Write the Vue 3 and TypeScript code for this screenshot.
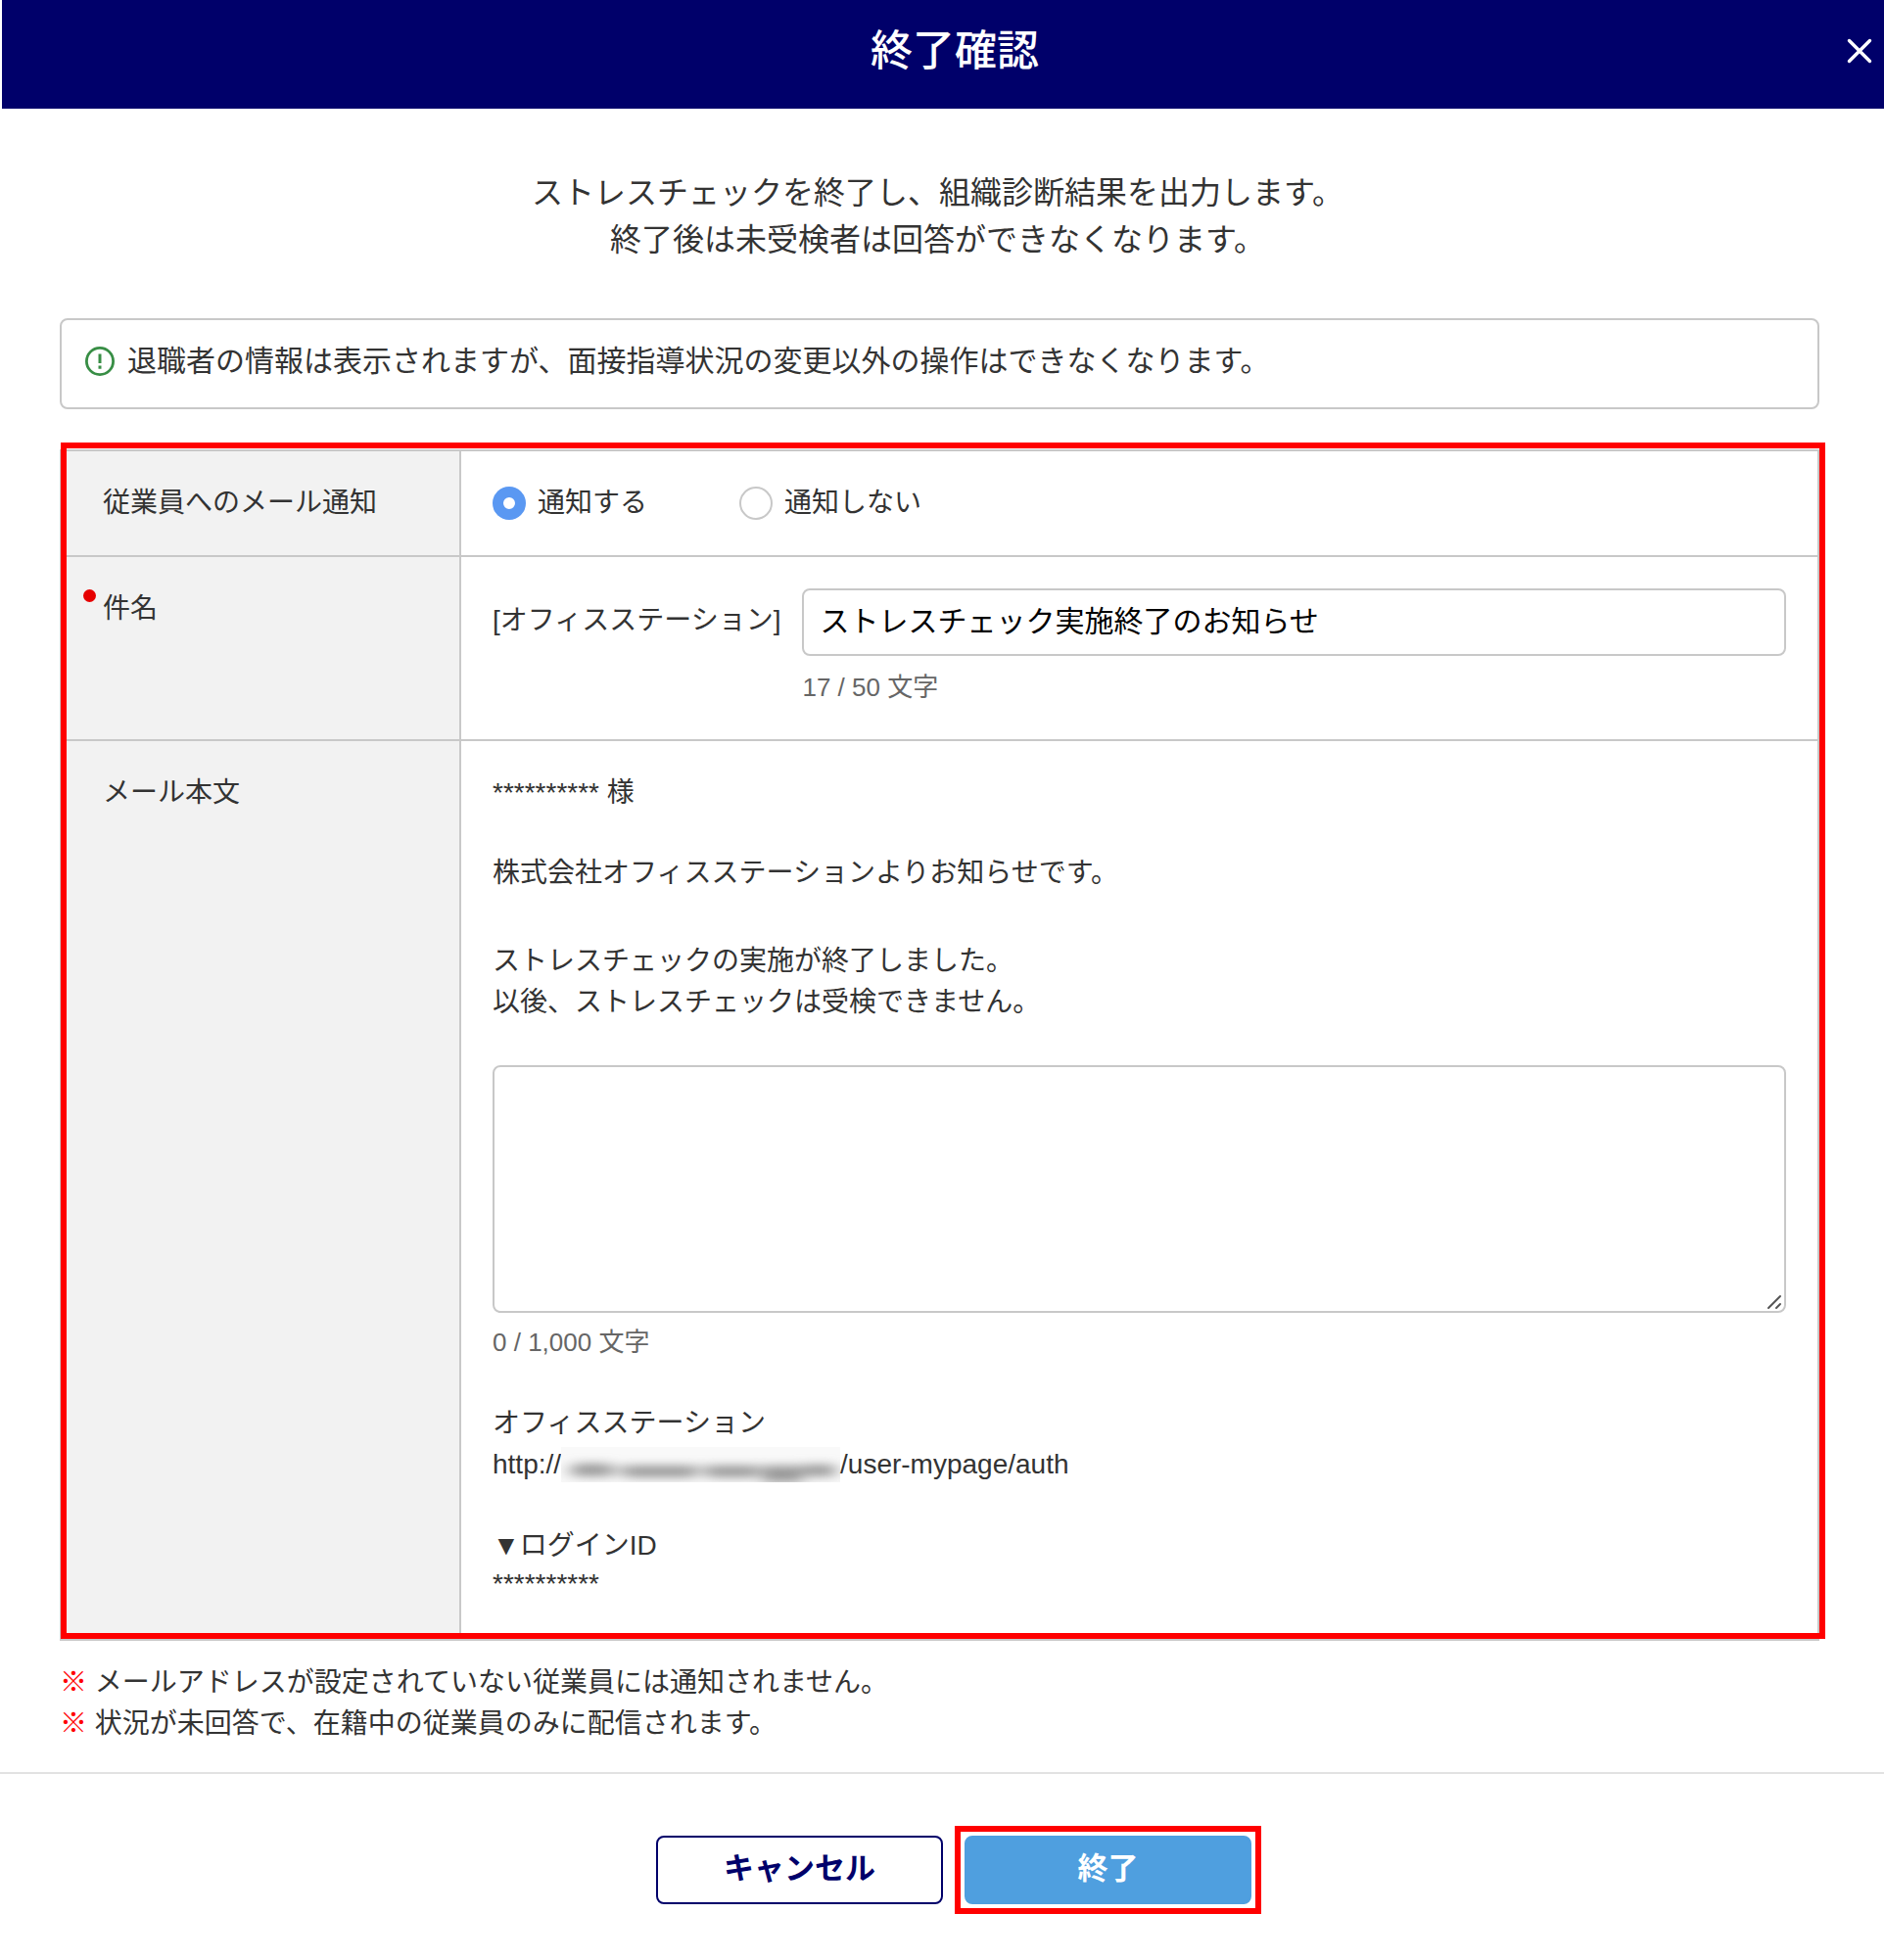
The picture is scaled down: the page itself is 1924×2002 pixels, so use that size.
<script setup lang="ts">
import { computed, ref } from 'vue'

const notify = ref<'yes' | 'no'>('yes')
const subject = ref('ストレスチェック実施終了のお知らせ')
const message = ref('')
const masked = '**********'
const notes = [
  'メールアドレスが設定されていない従業員には通知されません。',
  '状況が未回答で、在籍中の従業員のみに配信されます。',
]
const subjectCount = computed(() => `${subject.value.length} / 50 文字`)
const messageCount = computed(() => `${message.value.length} / 1,000 文字`)
</script>

<template>
  <div class="dialog" role="dialog" aria-labelledby="dialog-title">
    <header class="header">
      <h1 id="dialog-title">終了確認</h1>
      <button class="close" type="button" aria-label="閉じる">
        <svg width="26" height="26" viewBox="0 0 26 26" fill="none" stroke="#fff" stroke-width="3.4" stroke-linecap="round">
          <path d="M2.5 2.5 23.5 23.5M23.5 2.5 2.5 23.5" />
        </svg>
      </button>
    </header>

    <main class="content">
      <p class="intro">
        ストレスチェックを終了し、組織診断結果を出力します。<br />
        終了後は未受検者は回答ができなくなります。
      </p>

      <div class="notice">
        <svg width="32" height="32" viewBox="0 0 32 32" fill="none" stroke="#388e45" aria-hidden="true">
          <circle cx="16" cy="16" r="13.6" stroke-width="2.8" />
          <path d="M16 8.5v9.5M16 20.5v3.2" stroke-width="3" />
        </svg>
        <span>退職者の情報は表示されますが、面接指導状況の変更以外の操作はできなくなります。</span>
      </div>

      <div class="form-area">
        <table class="form">
          <tbody>
            <tr>
              <th scope="row">従業員へのメール通知</th>
              <td>
                <div class="radios">
                  <label><input v-model="notify" type="radio" name="notify" value="yes" />通知する</label>
                  <label><input v-model="notify" type="radio" name="notify" value="no" />通知しない</label>
                </div>
              </td>
            </tr>
            <tr>
              <th scope="row"><label class="required" for="subject">件名</label></th>
              <td>
                <div class="subject">
                  <span class="prefix">[オフィスステーション]</span>
                  <input id="subject" v-model="subject" type="text" />
                  <span class="count">{{ subjectCount }}</span>
                </div>
              </td>
            </tr>
            <tr>
              <th scope="row"><label for="message">メール本文</label></th>
              <td>
                <p class="to">{{ masked }} 様</p>
                <p class="from">株式会社オフィスステーションよりお知らせです。</p>
                <p class="lead">
                  ストレスチェックの実施が終了しました。<br />
                  以後、ストレスチェックは受検できません。
                </p>
                <div class="message">
                  <textarea id="message" v-model="message"></textarea>
                  <svg class="grip" width="16" height="16" viewBox="0 0 16 16" stroke="#555" stroke-width="2" stroke-linecap="round">
                    <path d="M2 14 14 2M10 14l4-4" />
                  </svg>
                </div>
                <p class="count">{{ messageCount }}</p>
                <p class="service">
                  オフィスステーション<br />
                  <span class="url">http://<svg class="redacted" width="285" height="36" viewBox="0 0 285 36" aria-hidden="true">
                    <defs>
                      <filter id="soft" filterUnits="userSpaceOnUse" x="-20" y="-20" width="325" height="76">
                        <feGaussianBlur stdDeviation="8 5" />
                      </filter>
                    </defs>
                    <rect width="285" height="36" fill="#f9f9f9" />
                    <g filter="url(#soft)" fill="#999">
                      <rect x="6" y="19" width="276" height="10" opacity="0.5" />
                      <rect x="14" y="17" width="36" height="13" />
                      <rect x="66" y="19" width="70" height="12" />
                      <rect x="150" y="19" width="50" height="12" />
                      <rect x="206" y="19" width="40" height="17" />
                      <rect x="248" y="18" width="30" height="12" />
                    </g>
                  </svg>/user-mypage/auth</span>
                </p>
                <p>▼ログインID</p>
                <p class="login-id">{{ masked }}</p>
              </td>
            </tr>
          </tbody>
        </table>
        <div class="highlight"></div>
      </div>

      <ul class="notes">
        <li v-for="note in notes" :key="note"><span class="mark">※</span> {{ note }}</li>
      </ul>
    </main>

    <footer class="footer">
      <button class="btn cancel" type="button">キャンセル</button>
      <div class="emphasis">
        <button class="btn finish" type="button">終了</button>
      </div>
    </footer>
  </div>
</template>

<style>
body {
  background: #fff;
}
</style>

<style scoped>
* {
  box-sizing: border-box;
}
.dialog {
  font-family: "Liberation Sans", "Noto Sans CJK JP", sans-serif;
  font-size: 28px;
  line-height: 42px;
  color: #333;
}
h1,
p,
ul {
  margin: 0;
  padding: 0;
}
.header {
  display: flex;
  align-items: center;
  height: 111px;
  margin-left: 2px;
  padding: 0 0 8px 74px;
  background: #00006a;
}
h1 {
  flex: 1;
  text-align: center;
  font-size: 43px;
  line-height: 64px;
  font-weight: 500;
  color: #fff;
}
.close {
  width: 50px;
  height: 50px;
  padding: 0;
  border: 0;
  background: none;
  cursor: pointer;
}
.close svg {
  display: block;
  margin: auto;
}
.content {
  padding: 62px 66px 28px 61px;
}
.intro {
  padding-right: 4px;
  font-size: 32px;
  line-height: 48px;
  text-align: center;
}
.notice {
  display: flex;
  align-items: center;
  gap: 12px;
  margin-top: 56px;
  padding: 20px 23px 25px;
  border: 2px solid #c8c8c8;
  border-radius: 8px;
  font-size: 30px;
  line-height: 44px;
}
.form-area {
  position: relative;
  margin-top: 41px;
}
.form {
  width: 100%;
  border-collapse: collapse;
}
.form th,
.form td {
  border: 2px solid #c8c8c8;
  padding: 32px;
  vertical-align: top;
  text-align: left;
  font-weight: 400;
}
.form th {
  width: 408px;
  padding-left: 42px;
  background: #f2f2f2;
}
.highlight {
  position: absolute;
  inset: -7px -6px 2px 1px;
  border: 6px solid #f00;
  pointer-events: none;
}
.radios {
  display: flex;
  gap: 94px;
}
.radios label {
  display: flex;
  align-items: center;
  gap: 12px;
}
.radios input {
  appearance: none;
  width: 34px;
  height: 34px;
  margin: 0;
  border: 2px solid #c8c8c8;
  border-radius: 50%;
  background: #fff;
}
.radios input:checked {
  border: 11px solid #5a98f2;
}
.required {
  position: relative;
}
.required::before {
  content: "";
  position: absolute;
  top: -4px;
  left: -20px;
  width: 13px;
  height: 13px;
  border-radius: 50%;
  background: #e60000;
}
.subject {
  display: grid;
  grid-template-columns: auto 1fr;
  align-items: center;
  column-gap: 22px;
  row-gap: 11px;
}
.prefix {
  padding-bottom: 4px;
}
.subject input {
  width: 100%;
  height: 69px;
  padding: 0 16px 8px;
  border: 2px solid #c8c8c8;
  border-radius: 8px;
  font: inherit;
  font-size: 30px;
  color: #000;
}
.count {
  font-size: 26px;
  color: #666;
}
.subject .count {
  grid-column: 2;
}
.to {
  margin-bottom: 40px;
}
.from {
  margin-bottom: 48px;
}
.lead {
  margin-bottom: 43px;
}
.message {
  position: relative;
  margin-bottom: 9px;
}
.message textarea {
  display: block;
  width: 100%;
  height: 253px;
  padding: 16px;
  border: 2px solid #c8c8c8;
  border-radius: 8px;
  font: inherit;
  color: #000;
  resize: none;
}
.grip {
  position: absolute;
  right: 4px;
  bottom: 3px;
}
.service {
  margin: 41px 0;
}
.url {
  display: flex;
  align-items: center;
  height: 42px;
}
.login-id {
  padding-bottom: 6px;
  line-height: 36px;
}
.notes {
  margin-top: 22px;
  list-style: none;
}
.mark {
  color: #f00;
}
.footer {
  display: flex;
  justify-content: center;
  align-items: center;
  gap: 12px;
  padding: 53px 0 48px 34px;
  border-top: 2px solid #e2e2e2;
}
.btn {
  display: block;
  width: 293px;
  height: 70px;
  padding: 0 0 2px;
  border: 2px solid #00006a;
  border-radius: 8px;
  background: #fff;
  font: inherit;
  font-size: 31px;
  font-weight: 700;
  color: #00006a;
  cursor: pointer;
}
.emphasis {
  padding: 4px;
  border: 6px solid #f00;
}
.finish {
  border-color: #4f9fdf;
  background: #4f9fdf;
  color: #fff;
}
</style>
